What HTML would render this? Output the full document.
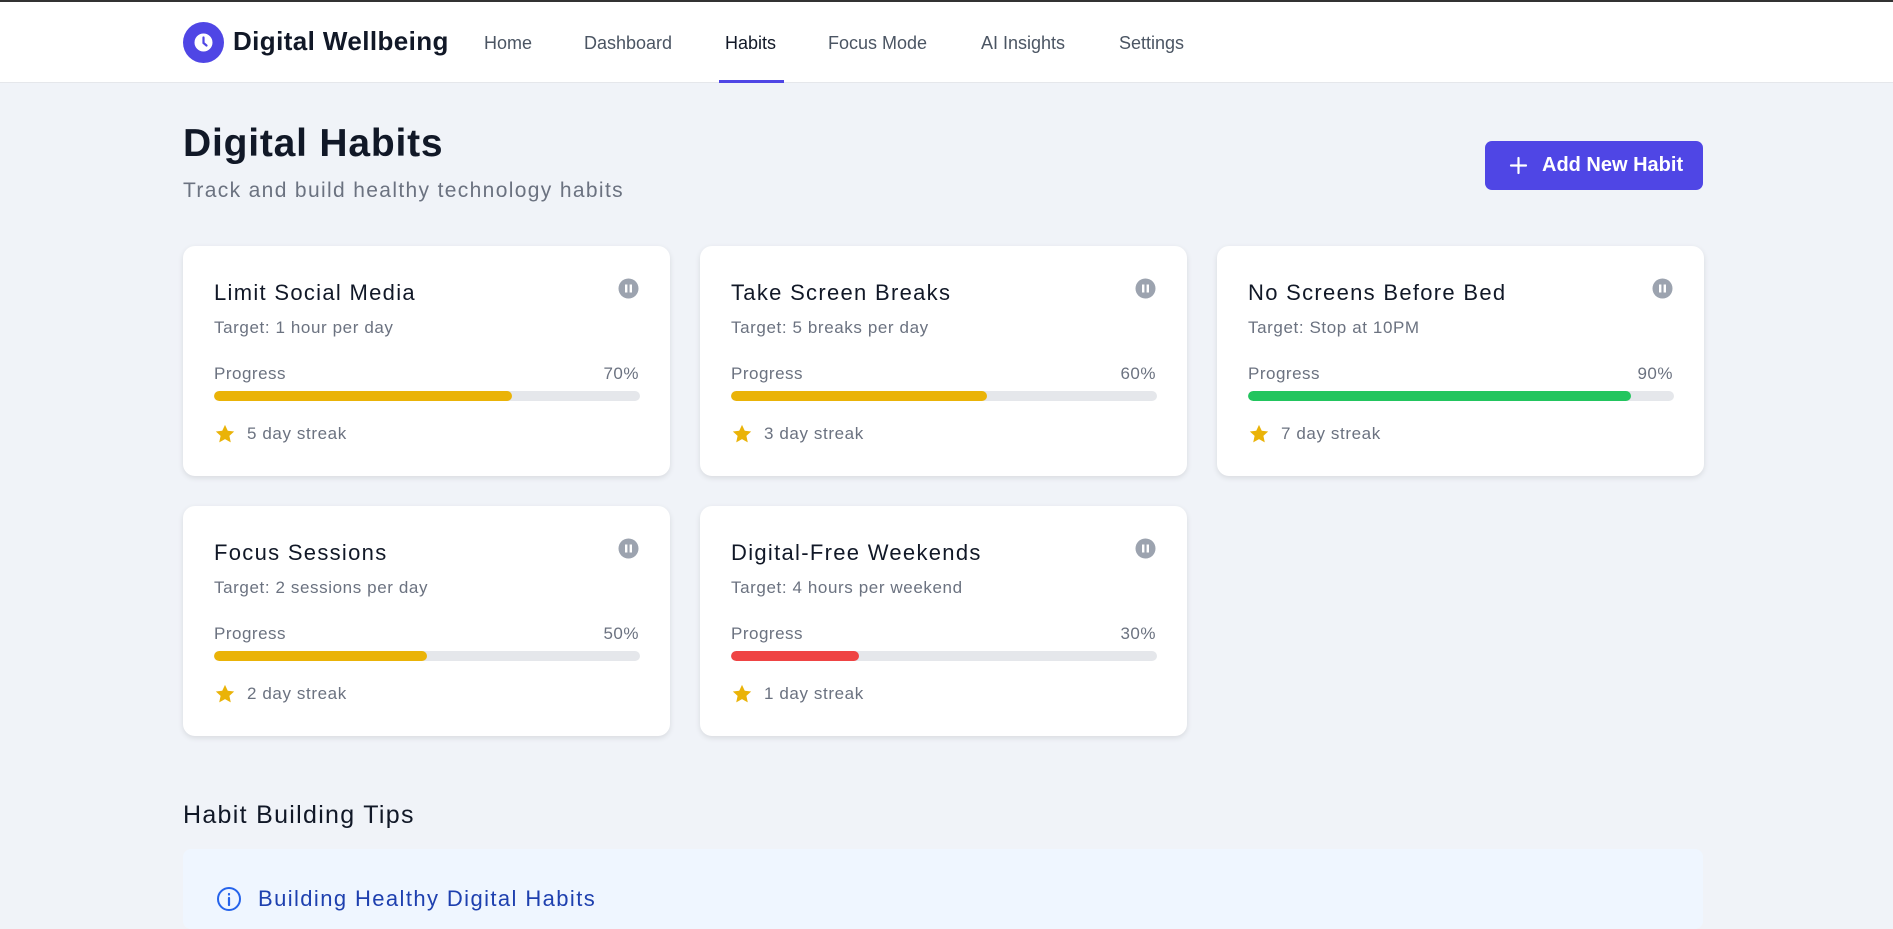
<!DOCTYPE html>
<html><head><meta charset="utf-8"><style>
*{box-sizing:border-box;margin:0;padding:0}
body{width:1893px;height:909px;overflow:hidden;background:#f0f3f8;font-family:"Liberation Sans",sans-serif;position:relative;border-top:2px solid #333}
.nav{position:absolute;top:0;left:0;width:1893px;height:81px;background:#fff;border-bottom:1px solid #e5e7eb}
.logo{position:absolute;left:183px;top:20px;width:41px;height:41px;border-radius:50%;background:#4f46e5}
.brand{position:absolute;left:233px;top:24px;font-size:26px;font-weight:bold;color:#111827;letter-spacing:0.4px}
.nl{position:absolute;top:31px;font-size:18px;color:#4b5563}
.ul{position:absolute;left:719px;top:78px;width:65px;height:3px;background:#4f46e5}
h1{position:absolute;left:183px;top:120px;font-size:39px;color:#111827;font-weight:bold;letter-spacing:0.8px}
.sub{position:absolute;left:183px;top:177px;font-size:21px;color:#6b7280;letter-spacing:1.35px}
.btn{position:absolute;left:1485px;top:139px;width:218px;height:49px;background:#4f46e5;border-radius:7px;color:#fff;font-size:20px;font-weight:bold;line-height:49px;padding-left:57px}
.btn svg{position:absolute;left:24px;top:15px}
.card{position:absolute;width:487px;height:230px;background:#fff;border-radius:12px;box-shadow:0 2px 6px rgba(0,0,0,.1)}
.card .t{position:absolute;left:31px;top:34px;font-size:22px;color:#111827;letter-spacing:1.3px}
.card .g{position:absolute;left:31px;top:72px;font-size:17px;color:#6b7280;letter-spacing:0.6px}
.card .p{position:absolute;left:31px;top:118px;font-size:17px;color:#6b7280;letter-spacing:0.5px}
.card .pc{position:absolute;right:31px;top:118px;font-size:17px;color:#6b7280;letter-spacing:0.5px}
.card .bar{position:absolute;left:31px;top:145px;width:426px;height:10px;background:#e5e7eb;border-radius:5px;overflow:hidden}
.card .bar div{height:10px;border-radius:5px}
.card .s{position:absolute;left:64px;top:178px;font-size:17px;color:#6b7280;letter-spacing:0.6px}
.card .st{position:absolute;left:31px;top:177px}
.card .pa{position:absolute;left:435px;top:32px}
h2{position:absolute;left:183px;top:799px;font-size:25px;font-weight:normal;color:#111827;letter-spacing:1.3px}
.tip{position:absolute;left:183px;top:847px;width:1520px;height:80px;background:#eff6ff;border-radius:8px}
.tip span{position:absolute;left:75px;top:37px;font-size:22px;color:#1e40af;letter-spacing:1.4px}
.tip svg{position:absolute;left:33px;top:37px}
</style></head><body>
<div class="nav">
<div class="logo"><svg width="41" height="41" viewBox="0 0 41 41"><circle cx="20.5" cy="20.5" r="9" fill="#fff"/><path d="M20.5 15.5v5.5l3 2.5" stroke="#4f46e5" stroke-width="2.2" fill="none" stroke-linecap="round"/></svg></div>
<div class="brand">Digital Wellbeing</div>
<div class="nl" style="left:484px">Home</div>
<div class="nl" style="left:584px">Dashboard</div>
<div class="nl" style="left:725px;color:#111827">Habits</div>
<div class="nl" style="left:828px">Focus Mode</div>
<div class="nl" style="left:981px">AI Insights</div>
<div class="nl" style="left:1119px">Settings</div>
<div class="ul"></div>
</div>
<h1>Digital Habits</h1>
<div class="sub">Track and build healthy technology habits</div>
<div class="btn"><svg width="19" height="19" viewBox="0 0 19 19"><path d="M9.5 2v15M2 9.5h15" stroke="#fff" stroke-width="2.2" stroke-linecap="round"/></svg>Add New Habit</div>

<div class="card" style="left:183px;top:244px"><div class="t">Limit Social Media</div><div class="g">Target: 1 hour per day</div><div class="p">Progress</div><div class="pc">70%</div><div class="bar"><div style="width:70%;background:#eab308"></div></div><svg class="st" width="22" height="22" viewBox="0 0 24 24"><path d="M12 2l3 6.5 7 .8-5.2 4.8 1.5 7L12 17.6 5.7 21.1l1.5-7L2 9.3l7-.8z" fill="#eab308"/></svg><div class="s">5 day streak</div><svg class="pa" width="21" height="21" viewBox="0 0 21 21"><circle cx="10.5" cy="10.5" r="10" fill="#9ca3af"/><rect x="7" y="6.5" width="2.4" height="8" fill="#fff"/><rect x="11.6" y="6.5" width="2.4" height="8" fill="#fff"/></svg></div>

<div class="card" style="left:700px;top:244px"><div class="t">Take Screen Breaks</div><div class="g">Target: 5 breaks per day</div><div class="p">Progress</div><div class="pc">60%</div><div class="bar"><div style="width:60%;background:#eab308"></div></div><svg class="st" width="22" height="22" viewBox="0 0 24 24"><path d="M12 2l3 6.5 7 .8-5.2 4.8 1.5 7L12 17.6 5.7 21.1l1.5-7L2 9.3l7-.8z" fill="#eab308"/></svg><div class="s">3 day streak</div><svg class="pa" width="21" height="21" viewBox="0 0 21 21"><circle cx="10.5" cy="10.5" r="10" fill="#9ca3af"/><rect x="7" y="6.5" width="2.4" height="8" fill="#fff"/><rect x="11.6" y="6.5" width="2.4" height="8" fill="#fff"/></svg></div>

<div class="card" style="left:1217px;top:244px"><div class="t">No Screens Before Bed</div><div class="g">Target: Stop at 10PM</div><div class="p">Progress</div><div class="pc">90%</div><div class="bar"><div style="width:90%;background:#22c55e"></div></div><svg class="st" width="22" height="22" viewBox="0 0 24 24"><path d="M12 2l3 6.5 7 .8-5.2 4.8 1.5 7L12 17.6 5.7 21.1l1.5-7L2 9.3l7-.8z" fill="#eab308"/></svg><div class="s">7 day streak</div><svg class="pa" width="21" height="21" viewBox="0 0 21 21"><circle cx="10.5" cy="10.5" r="10" fill="#9ca3af"/><rect x="7" y="6.5" width="2.4" height="8" fill="#fff"/><rect x="11.6" y="6.5" width="2.4" height="8" fill="#fff"/></svg></div>

<div class="card" style="left:183px;top:504px"><div class="t">Focus Sessions</div><div class="g">Target: 2 sessions per day</div><div class="p">Progress</div><div class="pc">50%</div><div class="bar"><div style="width:50%;background:#eab308"></div></div><svg class="st" width="22" height="22" viewBox="0 0 24 24"><path d="M12 2l3 6.5 7 .8-5.2 4.8 1.5 7L12 17.6 5.7 21.1l1.5-7L2 9.3l7-.8z" fill="#eab308"/></svg><div class="s">2 day streak</div><svg class="pa" width="21" height="21" viewBox="0 0 21 21"><circle cx="10.5" cy="10.5" r="10" fill="#9ca3af"/><rect x="7" y="6.5" width="2.4" height="8" fill="#fff"/><rect x="11.6" y="6.5" width="2.4" height="8" fill="#fff"/></svg></div>

<div class="card" style="left:700px;top:504px"><div class="t">Digital-Free Weekends</div><div class="g">Target: 4 hours per weekend</div><div class="p">Progress</div><div class="pc">30%</div><div class="bar"><div style="width:30%;background:#ef4444"></div></div><svg class="st" width="22" height="22" viewBox="0 0 24 24"><path d="M12 2l3 6.5 7 .8-5.2 4.8 1.5 7L12 17.6 5.7 21.1l1.5-7L2 9.3l7-.8z" fill="#eab308"/></svg><div class="s">1 day streak</div><svg class="pa" width="21" height="21" viewBox="0 0 21 21"><circle cx="10.5" cy="10.5" r="10" fill="#9ca3af"/><rect x="7" y="6.5" width="2.4" height="8" fill="#fff"/><rect x="11.6" y="6.5" width="2.4" height="8" fill="#fff"/></svg></div>

<h2>Habit Building Tips</h2>
<div class="tip"><svg width="26" height="26" viewBox="0 0 26 26"><circle cx="13" cy="13" r="11" fill="none" stroke="#2563eb" stroke-width="2"/><path d="M13 12v7M13 8v.5" stroke="#2563eb" stroke-width="2.2" stroke-linecap="round"/></svg><span>Building Healthy Digital Habits</span></div>
</body></html>
